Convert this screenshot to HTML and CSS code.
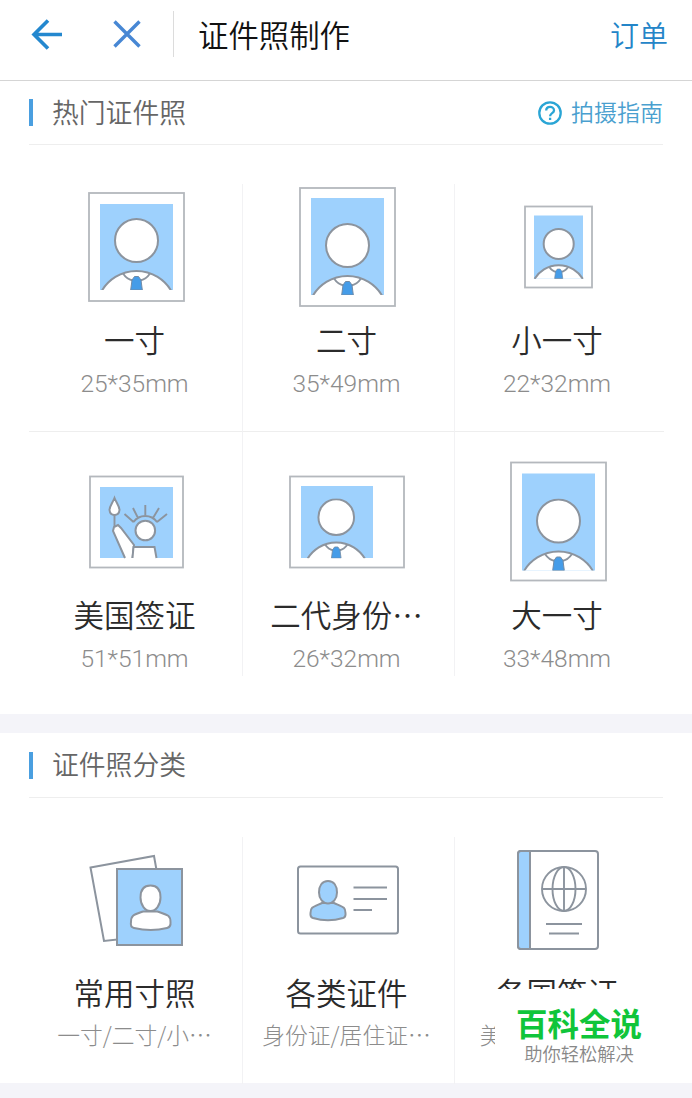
FILE: index.html
```html
<!DOCTYPE html>
<html lang="zh-CN">
<head>
  <meta charset="UTF-8" />
  <title>证件照制作</title>
  <link rel="stylesheet" href="styles.css">
</head>
<body>
  <!-- 公用图形 -->
  <svg class="defs" width="0" height="0">
    <symbol id="person" viewBox="0 0 73 72">
      <path class="body" d="M2 72.5A40.3 40.3 0 0 1 71 72.5" />
      <path class="line" d="M23 55.5Q27 61.500 33 62.5M50 55.5Q46 61.500 40 62.5" />
      <path class="tie" d="M32 62L34.5 58.500H38.500L41 62L42.3 72H30.7Z" />
      <circle class="head" cx="36.5" cy="22.5" r="21.5" />
    </symbol>
  </svg>

  <header class="topbar">
    <svg class="back" width="32" height="32" viewBox="0 0 32 32">
      <path d="M17 2.5L3 16.5L17 30.5M3 16.5H31" />
    </svg>
    <svg class="close" width="28" height="28" viewBox="0 0 28 28">
      <path d="M1.5 1.5L26.5 26.5M26.5 1.5L1.5 26.5" />
    </svg>
    <h1>证件照制作</h1>
    <a class="order">订单</a>
  </header>

  <section class="section">
    <div class="section-head">
      <h2>热门证件照</h2>
      <a class="guide">
        <svg width="24" height="24" viewBox="0 0 24 24">
          <circle cx="12" cy="12" r="10.7" />
          <path d="M8.2 9.6C8.2 4.600 16 4.800 16 9.4C16 12.2 12.1 12 12.1 15.2M12.1 16.8V19" />
        </svg>
        <span>拍摄指南</span>
      </a>
    </div>
    <div class="grid">
      <div class="cell">
        <div class="icon">
          <svg width="94" height="110" viewBox="2 0 94 110" overflow="visible">
            <rect class="frame" x="3" y="1" width="95" height="108" />
            <rect class="blue" x="14" y="12" width="73" height="86" />
            <use href="#person" x="14" y="26" width="73" height="72" />
          </svg>
        </div>
        <h3>一寸</h3>
        <p>25*35mm</p>
      </div>
      <div class="cell">
        <div class="icon">
          <svg width="98" height="120" viewBox="0 0 98 120">
            <rect class="frame" x="2" y="1" width="95" height="118" />
            <rect class="blue" x="13" y="11" width="73" height="97" />
            <use href="#person" x="13" y="36" width="73" height="72" />
          </svg>
        </div>
        <h3>二寸</h3>
        <p>35*49mm</p>
      </div>
      <div class="cell">
        <div class="icon">
          <svg width="70" height="84" viewBox="0 0 70 84" overflow="visible">
            <rect class="frame" x="3" y="1.500" width="67" height="81" />
            <rect class="blue" x="12" y="10.5" width="49" height="63.5" />
            <use href="#person" x="11.2" y="22.6" width="51" height="51.5" />
          </svg>
        </div>
        <h3>小一寸</h3>
        <p>22*32mm</p>
      </div>
      <div class="cell second">
        <div class="icon">
          <svg width="96" height="92" viewBox="0 0 96 92" overflow="visible">
            <rect class="frame" x="3" y="0.500" width="93" height="91" />
            <rect class="blue" x="13" y="11" width="73" height="71" />
            <path class="head" d="M38 82L26 55L27 51L31 49L34 52L47 69L45.5 82" />
            <path class="head" d="M45.5 82L46.5 71H67.5L69.5 82" />
            <path class="line" d="M27.5 39V50M46.5 46A14.5 14.5 0 0 1 70 46M46.5 46L37.5 38M51 42L46 32M58.3 39V29M66 42L72 32M70 46L80 38" />
            <path class="head" d="M27.5 22C25.5 27 22.5 30 22.5 34Q23 39 27.5 39Q32 39 32.5 34C32.5 30 29.5 27 27.5 22Z" />
            <circle class="head" cx="58.3" cy="54.5" r="9.8" />
          </svg>
        </div>
        <h3>美国签证</h3>
        <p>51*51mm</p>
      </div>
      <div class="cell second">
        <div class="icon">
          <svg width="116" height="92" viewBox="0 0 116 92" overflow="visible">
            <rect class="frame" x="1" y="0.500" width="114" height="91" />
            <rect class="blue" x="12" y="10" width="72" height="72" />
            <use href="#person" x="17" y="22.5" width="60.5" height="59.7" />
          </svg>
        </div>
        <h3>二代身份…</h3>
        <p>26*32mm</p>
      </div>
      <div class="cell second">
        <div class="icon">
          <svg width="98" height="120" viewBox="0 0 98 120" overflow="visible">
            <rect class="frame" x="3" y="0.500" width="95" height="118" />
            <rect class="blue" x="14" y="11.500" width="73" height="97" />
            <use href="#person" x="14" y="36.500" width="73" height="72" />
          </svg>
        </div>
        <h3>大一寸</h3>
        <p>33*48mm</p>
      </div>
    </div>
  </section>

  <section class="section category">
    <div class="section-head">
      <h2>证件照分类</h2>
    </div>
    <div class="grid">
      <div class="cell">
        <div class="icon">
          <svg width="96" height="92" viewBox="0 0 96 92">
            <path class="head" d="M3.5 13.5L67 2L81 80L17 87Z" />
            <rect class="photo" x="30" y="15" width="65" height="76" />
            <path class="head" d="M56 57.5C46 61 44 61.5 44 68Q43 73 47 74Q64 78 80 74Q84 73 83.5 68C83.5 61.5 81 61 70.5 57.5Z" />
            <path class="head" d="M63.5 31.5C70 31.5 73.5 36 73.5 43.5C73.5 51 69 57 63.5 57C58 57 53.5 51 53.5 43.5C53.5 36 57 31.5 63.5 31.5Z" />
          </svg>
        </div>
        <h3>常用寸照</h3>
        <p>一寸/二寸/小…</p>
      </div>
      <div class="cell">
        <div class="icon">
          <svg width="106" height="70" viewBox="0 0 106 70">
            <rect class="head" x="4" y="1.5" width="100" height="67" rx="2.5" />
            <path class="photo" d="M28 38C19 42 16.5 42 16.5 48Q16 52 19 53Q34 57.5 49 53Q52 52 51.5 48C51.5 42 49 42 40 38Z" />
            <path class="photo" d="M34 16C40 16 43 21 43 27.5C43 34 39 38.5 34 38.5C29 38.5 25 34 25 27.5C25 21 28 16 34 16Z" />
            <path class="line" d="M59.5 22.5H93M59.5 34H93M59.5 45H78" />
          </svg>
        </div>
        <h3>各类证件</h3>
        <p>身份证/居住证…</p>
      </div>
      <div class="cell">
        <div class="icon">
          <svg width="86" height="100" viewBox="0 0 86 100">
            <rect class="head" x="4" y="1" width="80" height="98" rx="3" />
            <path class="photo" d="M16 1H7Q4 1 4 4V96Q4 99 7 99H16Z" />
            <circle class="line" cx="50" cy="39" r="22" />
            <ellipse class="line" cx="50" cy="39" rx="11.5" ry="22" />
            <path class="line" d="M50 17V61M28 39H72M32 74H68M35 83.5H65" />
          </svg>
        </div>
        <h3>各国签证</h3>
        <p>美国/日本/韩…</p>
      </div>
    </div>
  </section>

  <div class="watermark">
    <strong>百科全说</strong>
    <span>助你轻松解决</span>
  </div>
</body>
</html>
```
FILE: styles.css
```css
* {
  box-sizing: border-box;
}
body {
  margin: 0;
  height: 1098px;
  overflow: hidden;
  position: relative;
  background: #f4f4f9;
  font-family: "Noto Sans CJK SC", sans-serif;
  font-weight: 350;
}
h1,
h2,
h3,
p {
  margin: 0;
  font-weight: 350;
  white-space: nowrap;
}
svg {
  display: block;
  fill: none;
}
.defs {
  position: absolute;
}

/* 顶部栏 */
.topbar {
  display: flex;
  align-items: center;
  height: 81px;
  padding: 0 24px 12px 31px;
  background: #fff;
  border-bottom: 1px solid #d5d5d5;
}
.back {
  stroke: #2488cf;
  stroke-width: 3.6;
}
.close {
  margin-left: 50px;
  stroke: #4787d4;
  stroke-width: 3.4;
}
.topbar h1 {
  margin-left: 32px;
  padding-left: 24px;
  border-left: 1px solid #dcdcdc;
  font-size: 30.4px;
  line-height: 46px;
  color: #111;
}
.order {
  margin-left: auto;
  font-size: 29px;
  color: #2485c8;
}

/* 分区 */
.section {
  padding: 0 29px;
  background: #fff;
  height: 633px;
}
.section.category {
  margin-top: 19px;
  height: 350px;
}
.section-head {
  display: flex;
  align-items: center;
  justify-content: space-between;
  height: 64px;
  border-bottom: 1px solid #eee;
}
.category .section-head {
  height: 65px;
}
.section-head h2 {
  display: flex;
  align-items: center;
  height: 36px;
  font-size: 26.8px;
  line-height: 34px;
  padding-bottom: 2px;
  color: #666;
}
.section-head h2::before {
  content: "";
  width: 4px;
  height: 27px;
  margin: 2px 19px 0 0;
  background: #4a9fe0;
}
.guide {
  display: flex;
  align-items: center;
  gap: 9px;
  font-size: 23px;
  line-height: 32px;
  color: #4a9fcf;
}
.guide span {
  padding-bottom: 3px;
}
.guide svg {
  stroke: #2aa5d5;
  stroke-width: 2.3;
}

.grid {
  display: grid;
  grid-template-columns: 214px 212px 209px;
  padding-top: 39px;
  margin-right: -1px;
}
.cell {
  display: flex;
  flex-direction: column;
  align-items: center;
  height: 247px;
  padding-right: 2px;
  border-right: 1px solid #f2f2f4;
}
.cell:nth-child(3n+2) {
  padding-right: 4px;
}
.cell:nth-child(3n) {
  padding-right: 5px;
  border-right: none;
}
.cell.second {
  height: 245px;
  padding-top: 27px;
  border-top: 1px solid #eee;
}
.icon {
  display: flex;
  align-items: center;
  height: 126px;
}
.cell h3 {
  margin-top: 8px;
  font-size: 30.5px;
  line-height: 42px;
  color: #2b2b2b;
}
.cell p {
  margin-top: 7px;
  font-family: Roboto, "Noto Sans CJK SC", sans-serif;
  font-weight: 300;
  font-size: 24.5px;
  line-height: 34px;
  color: #8c8c8c;
}
.category .cell p {
  margin-top: 5px;
  font-family: "Noto Sans CJK SC", sans-serif;
  font-size: 22.8px;
}

/* 图标线条 */
.frame {
  fill: #fff;
  stroke: #b4b8bd;
  stroke-width: 1.8;
}
.blue {
  fill: #9ed1fd;
}
.head,
.body {
  fill: #fff;
  stroke: #8c949e;
  stroke-width: 2;
  vector-effect: non-scaling-stroke;
}
.line {
  stroke: #8c949e;
  stroke-width: 1.9;
  vector-effect: non-scaling-stroke;
}
.photo {
  fill: #9ed1fd;
  stroke: #8c949e;
  stroke-width: 2;
}
.tie {
  fill: #459ce8;
  stroke: #718ba6;
  stroke-width: 1;
}

/* 右下角水印 */
.watermark {
  position: absolute;
  left: 495px;
  top: 989px;
  width: 173px;
  height: 92px;
  padding-top: 12px;
  display: flex;
  flex-direction: column;
  align-items: center;
  background: #fff;
}
.watermark strong {
  padding-right: 5px;
  font-size: 31.5px;
  line-height: 42px;
  font-weight: 700;
  color: #10c53a;
}
.watermark span {
  padding-right: 5px;
  font-size: 18.3px;
  line-height: 20px;
  color: #888;
}
```
